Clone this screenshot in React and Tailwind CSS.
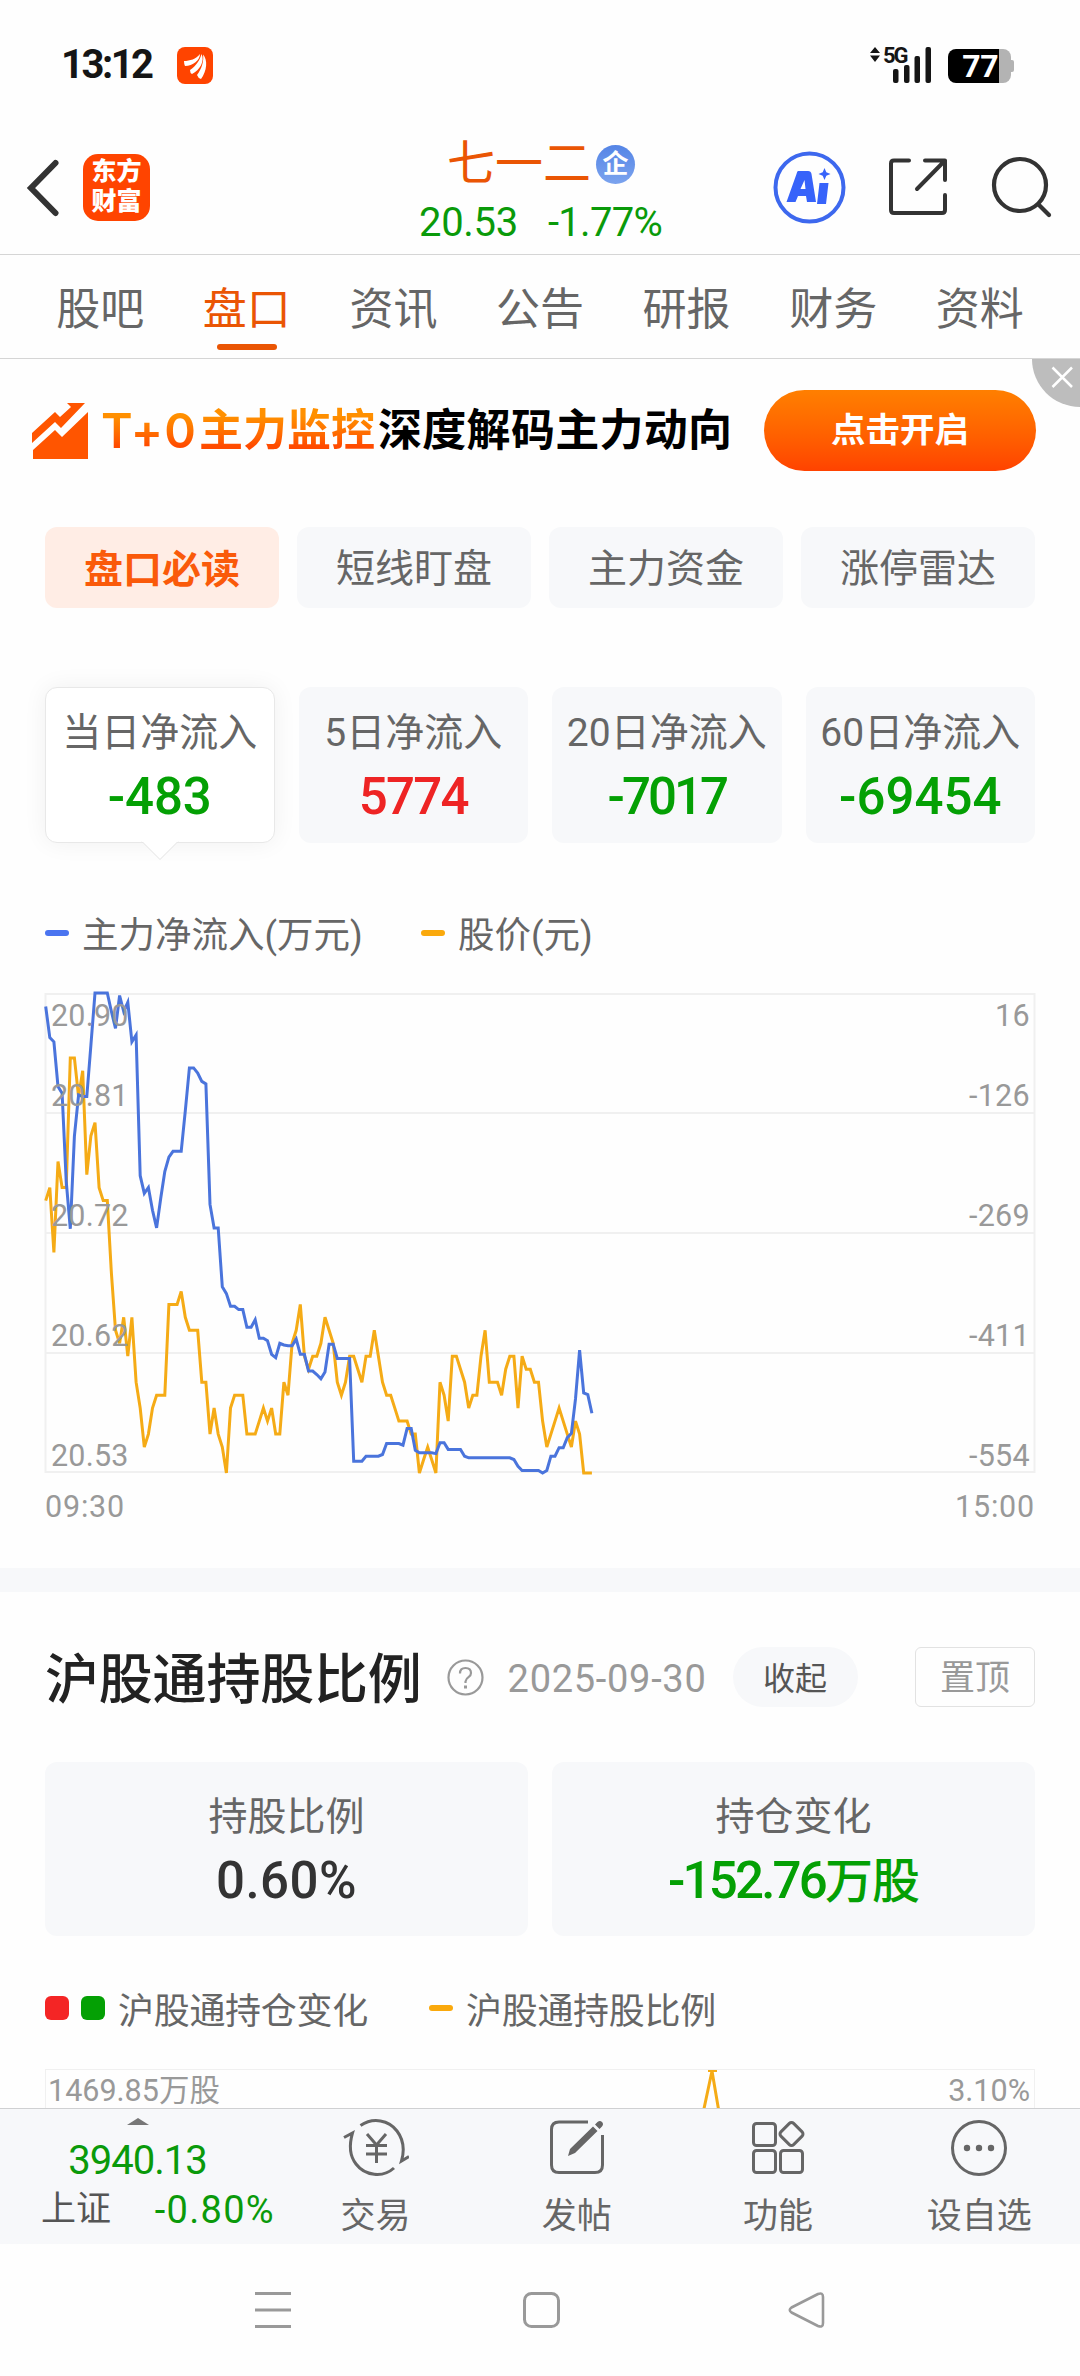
const tabs = ["股吧", "盘口", "资讯", "公告", "研报", "财务", "资料"];
const pills = ["盘口必读", "短线盯盘", "主力资金", "涨停雷达"];

const flows = [
  { label: "当日净流入", value: "-483", color: "tracking-[-0.1px] text-[#04a004]" },
  { label: "5日净流入", value: "5774", color: "tracking-[-1.7px] text-[#ee2424]" },
  { label: "20日净流入", value: "-7017", color: "tracking-[-3px] text-[#04a004]" },
  { label: "60日净流入", value: "-69454", color: "tracking-[0px] text-[#04a004]" },
];

const axis = [
  { price: "20.90", flow: "16" },
  { price: "20.81", flow: "-126" },
  { price: "20.72", flow: "-269" },
  { price: "20.62", flow: "-411" },
  { price: "20.53", flow: "-554" },
];

// net inflow per minute, in 10k yuan
const flowSeries = [
  0, -37, -42, -95, -103, -207, -264, -154, -105, -107, -107, -46, 16, 16, 16, 16, -6, -26, 13, -6,
  5, -42, -34, -201, -222, -215, -242, -263, -228, -196, -179, -172, -172, -172, -124, -73, -73, -79,
  -89, -92, -235, -263, -263, -333, -341, -356, -356, -360, -360, -381, -381, -372, -394, -394, -397,
  -413, -417, -400, -402, -403, -403, -395, -413, -413, -433, -433, -437, -442, -434, -401, -401,
  -418, -418, -418, -418, -540, -540, -540, -534, -534, -534, -534, -532, -519, -519, -519, -519,
  -521, -501, -501, -527, -530, -530, -530, -530, -531, -518, -518, -526, -526, -526, -526, -534,
  -536, -536, -536, -536, -536, -536, -536, -536, -536, -536, -536, -538, -546, -551, -551, -551,
  -551, -551, -554, -551, -534, -534, -524, -524, -512, -507, -466, -408, -459, -461, -483,
];

// price per minute, in cents above 20.53
const priceSeries = [
  21, 22, 17, 24, 22, 22, 32, 32, 29, 31, 23, 26, 27, 22, 21, 21, 15.4, 11, 10, 12, 9, 12, 7, 5, 2, 3,
  5, 6, 6, 6, 13, 13, 13, 14, 12, 11, 11, 11, 7, 7, 3, 5, 3, 2, 0, 5, 6, 6, 6, 3, 3, 3, 4, 5, 4, 5, 3,
  3, 7, 6, 10, 11, 13, 9, 8, 9, 9, 10, 12, 11, 10, 7, 6, 7, 9, 9, 8, 7, 9, 9, 11, 9, 7, 6, 6, 5, 4, 4,
  4, 3, 3, 0, 1, 2, 1, 0, 7, 6, 4, 9, 9, 8, 7, 5, 6, 6, 9, 11, 7, 7, 7, 6, 8, 9, 9, 5, 9, 8, 8, 7, 7,
  4, 2, 3, 4, 5, 4, 3, 2, 4, 3, 0, 0, 0,
];

const toPoints = (series, min, max) =>
  series.map((v, i) => `${(0.7 + i * 4.107).toFixed(1)},${(((max - v) / (max - min)) * 480 - 1).toFixed(1)}`).join(" ");

const StatusBar = () => (
  <div className="flex h-[105px] shrink-0 items-start justify-between pl-[61px] pr-[66px] pt-[46px]">
    <div className="flex items-center">
      <span className="w-[116px] text-[40px] font-bold leading-[38px] tracking-[-2.5px] text-[#151515]">13:12</span>
      <svg width="36" height="37" viewBox="0 0 36 37">
        <rect width="36" height="37" rx="8" fill="#ff4400" />
        <path d="M7 14C13 14 19 12 23 7C23 13 16 19 8 19Q7 17 7 14z" fill="#fff" />
        <path d="M13 23C19 19 23 13 24.500 7C28 14 23 23 15 27Q13 26 13 23z" fill="#fff" />
        <path d="M20 28C25 21 27 14 26 7.500C31 13 30 24 24 32Q21 31 20 28z" fill="#fff" />
      </svg>
    </div>
    <div className="flex items-start">
      <svg className="mt-[-8px]" width="66" height="46" viewBox="0 -8 66 46" fill="#151515">
        <path d="M2 7L7 1L12 7zM2 9.500L7 16L12 9.500z" />
        <text x="15" y="16.500" fontSize="22" fontWeight="700" fontFamily="Roboto, sans-serif" letterSpacing="-2">5G</text>
        <rect x="25" y="23" width="5.500" height="14" rx="2" />
        <rect x="36" y="19" width="5.500" height="18" rx="2" />
        <rect x="46.500" y="10" width="5.500" height="27" rx="2" />
        <rect x="57.500" y="1" width="5.500" height="36" rx="2" />
      </svg>
      <div className="ml-[14px] mt-[3px] flex h-[34px] items-center">
        <div className="flex h-full w-[51px] items-center justify-end rounded-l-[8px] bg-black pr-[1px] text-[32px] font-bold leading-none tracking-[-0.5px] text-white">
          77
        </div>
        <div className="h-full w-[12px] rounded-r-[8px] bg-[#b3b3b3]" />
        <div className="h-[12px] w-[3px] rounded-r-[2px] bg-[#b3b3b3]" />
      </div>
    </div>
  </div>
);

const Header = () => (
  <header className="flex h-[150px] shrink-0 border-b border-[#d5d5d5] pl-[26px]">
    <svg className="mt-[54px]" width="34" height="58" viewBox="0 0 34 58" fill="none" stroke="#333" strokeWidth="6">
      <path d="M29.500 4L5 29L29.500 54" strokeLinecap="round" />
    </svg>
    <div className="ml-[23px] mt-[49px] flex h-[67px] w-[67px] flex-col items-center justify-center rounded-[15px] bg-[#ff4400] pb-[2px] text-[25px] font-black leading-[30px] text-white">
      <span>东方</span>
      <span>财富</span>
    </div>
    <div className="ml-[269px] mt-[32px] w-[260px]">
      <div className="flex h-[54px] items-center pl-[28px]">
        <span className="text-[48px] leading-none text-[#ea5504]">七一二</span>
        <span className="ml-[5px] flex h-[39px] w-[39px] items-center justify-center rounded-full bg-gradient-to-b from-[#5585e6] to-[#7ba3ee] text-[26px] font-bold leading-none text-white">
          企
        </span>
      </div>
      <div className="mt-[4px] flex gap-[30px] whitespace-nowrap text-[40px] leading-[56px] text-[#0a9a0a]">
        <span className="tracking-[-0.3px]">20.53</span>
        <span className="tracking-[-0.7px]">-1.77%</span>
      </div>
    </div>
    <div className="ml-[94px] mt-[46px] flex">
      <svg width="73" height="73" viewBox="0 0 73 73">
        <circle cx="36.500" cy="36.500" r="34" fill="none" stroke="#3d68ee" strokeWidth="4" />
        <path d="M25 20h10q3 0 3.500 3l4.500 28h-9l-1-6h-8l-2.500 6h-9l10-28q.7-3 1.500-3zM27.500 38h5l-1-9z" fill="#3763fa" fillRule="evenodd" />
        <path d="M46.500 32h9l-2.500 21h-9zM51.500 17l1.800 4.200 4.200 1.800-4.200 1.800-1.800 4.200-1.800-4.200-4.200-1.800 4.200-1.800z" fill="#3763fa" />
      </svg>
      <svg className="ml-[42px] mt-[6px]" width="60" height="60" viewBox="0 0 60 60" fill="none" stroke="#333" strokeWidth="4" strokeLinecap="round" strokeLinejoin="round">
        <path d="M21 3.500H6Q3 3.500 3 6.500V53Q3 56 6 56H54Q57 56 57 53V38" />
        <path d="M37 3.500H57V23M57 3.500L29 32" />
      </svg>
      <svg className="ml-[43px] mt-[4px]" width="64" height="64" viewBox="0 0 64 64" fill="none" stroke="#333" strokeWidth="4.200" strokeLinecap="round">
        <circle cx="29" cy="30" r="26" />
        <path d="M48 50L58 60" />
      </svg>
    </div>
  </header>
);

const Tabs = () => (
  <nav className="flex h-[104px] shrink-0 border-b border-[#d5d5d5] px-[27px]">
    {tabs.map((tab) => (
      <div key={tab} className="flex flex-1 flex-col items-center pt-[23px]">
        <span className={tab === "盘口" ? "text-[44px] leading-[64px] text-[#ea5504]" : "text-[44px] leading-[64px] text-[#666]"}>{tab}</span>
        {tab === "盘口" && <span className="mt-[2px] h-[6px] w-[60px] rounded-full bg-[#ea5504]" />}
      </div>
    ))}
  </nav>
);

const Banner = () => (
  <div className="relative flex h-[112px] items-center pl-[31px] pt-[31px]">
    <svg width="58" height="57" viewBox="0 0 58 57" fill="#ff5500">
      <path d="M1 41V31L24 10L29 15L40 5L36 1H54L30 26L24 20z" />
      <path d="M2 48L24 28L31 35L57 10V57H2z" />
    </svg>
    <div className="ml-[12px] flex items-center whitespace-nowrap bg-gradient-to-b from-[#ff9000] from-25% to-[#ff4a00] to-75% bg-clip-text leading-[60px] text-transparent">
      <span className="w-[98px] font-[Inter] text-[48px] font-semibold tracking-[1px]">T+0</span>
      <span className="text-[44px] font-bold">主力监控</span>
    </div>
    <span className="ml-[3px] whitespace-nowrap text-[44px] font-bold leading-[60px] tracking-[0.3px] text-black">深度解码主力动向</span>
    <button className="ml-auto mr-[44px] h-[81px] w-[272px] rounded-full bg-gradient-to-b from-[#ff7f00] to-[#ff4200] text-[34.500px] font-bold text-white">
      点击开启
    </button>
    <div className="absolute right-0 top-0 h-[48px] w-[48px] rounded-bl-full bg-[#bdbdbd]">
      <svg width="48" height="48" viewBox="0 0 48 48" stroke="#fff" strokeWidth="2.500">
        <path d="M20.500 8.500L40 28M40 8.500L20.500 28" />
      </svg>
    </div>
  </div>
);

const FlowCards = () => (
  <div className="mt-[79px] grid grid-cols-4 gap-[24px] px-[45px]">
    {flows.map((f, i) => (
      <div
        key={f.label}
        className={
          i === 0
            ? "relative flex h-[156px] flex-col items-center rounded-[12px] border border-[#e8e8e8] bg-white pt-[16px] shadow-[0_0_24px_rgba(0,0,0,0.06)]"
            : "flex h-[156px] flex-col items-center rounded-[12px] bg-[#f7f8fa] pt-[17px]"
        }
      >
        <span className="whitespace-nowrap text-[39px] leading-[58px] text-[#666]">{f.label}</span>
        <span className={`text-[51px] font-medium leading-[70px] ${f.color}`}>{f.value}</span>
        {i === 0 && (
          <svg className="absolute -bottom-[19px] left-[95px]" width="38" height="20" viewBox="0 0 38 20">
            <path d="M1 0.500L19 18.500L37 0.500" fill="#fff" stroke="#e3e3e3" />
            <path d="M1 0H37" stroke="#fff" strokeWidth="2" />
          </svg>
        )}
      </div>
    ))}
  </div>
);

const FlowChart = () => (
  <div className="mt-[38px] px-[45px]">
    <div className="relative h-[479px]">
      <svg className="overflow-visible" width="990" height="479" viewBox="0 0 990 479" fill="none">
        <path d="M0.500 0H989.500V478H0.500zM0 119H990M0 239H990M0 359H990" stroke="#f0f0f0" strokeWidth="2" />
        <polyline points={toPoints(priceSeries, 0, 37)} stroke="#f5ab16" strokeWidth="3" />
        <polyline points={toPoints(flowSeries, -554, 16)} stroke="#4a74dc" strokeWidth="3" />
      </svg>
      {/* value scales sit on top of the lines */}
      <div className="absolute inset-0 flex flex-col pl-[6px] pr-[5px] pt-[2px] text-[30.500px] leading-[40px] text-[#999]">
        {axis.map((a, i) => (
          <div key={a.price} className={i === 0 ? "mb-[40px] flex justify-between" : i === 4 ? "flex justify-between" : "mb-[80px] flex justify-between"}>
            <span className="tracking-[0.2px]">{a.price}</span>
            <span className="tracking-[0.3px]">{a.flow}</span>
          </div>
        ))}
      </div>
    </div>
    <div className="flex h-[68px] items-center justify-between text-[30.500px] tracking-[0.8px] text-[#999]">
      <span>09:30</span>
      <span>15:00</span>
    </div>
  </div>
);

const Holding = () => (
  <section>
    <div className="mt-[55px] flex h-[60px] items-center px-[45px]">
      <h2 className="pt-[7px] text-[54px] font-medium leading-[60px] tracking-[-0.2px] text-[#222]">沪股通持股比例</h2>
      <svg className="ml-[25px]" width="37" height="37" viewBox="0 0 37 37" fill="none" stroke="#999" strokeWidth="2.200">
        <circle cx="18.500" cy="18.500" r="17" />
        <path d="M13 14.500Q13 9 18.500 9T24 14Q24 16.500 21.500 18.200T18.500 22.500V24" />
        <path d="M18.500 26.500V29.500" strokeWidth="3" />
      </svg>
      <span className="ml-[24px] w-[225px] pt-[4px] text-[38px] tracking-[0.7px] text-[#999]">2025-09-30</span>
      <span className="flex h-[60px] w-[125px] items-center justify-center rounded-full bg-[#f7f8fa] pt-[3px] text-[32px] text-[#555]">收起</span>
      <span className="ml-auto flex h-[60px] w-[120px] items-center justify-center rounded-[6px] border border-[#e2e2e2] pt-[4px] text-[35px] text-[#999]">置顶</span>
    </div>
    <div className="mt-[55px] grid grid-cols-2 gap-[24px] px-[45px]">
      <div className="flex h-[174px] flex-col items-center rounded-[12px] bg-[#f7f8fa] pt-[26px]">
        <span className="text-[39px] leading-[58px] text-[#666]">持股比例</span>
        <span className="text-[51px] font-medium leading-[70px] tracking-[0.5px] text-[#333]">0.60%</span>
      </div>
      <div className="flex h-[174px] flex-col items-center rounded-[12px] bg-[#f7f8fa] pt-[26px]">
        <span className="text-[39px] leading-[58px] text-[#666]">持仓变化</span>
        <span className="text-[51px] font-medium leading-[70px] tracking-[-2.800px] text-[#04a004]">
          -152.76<span className="text-[48px] tracking-[-1px]">万股</span>
        </span>
      </div>
    </div>
    <div className="mt-[55px] flex h-[42px] items-center px-[45px] text-[36px] leading-[42px] text-[#666]">
      <span className="mb-[9px] h-[24px] w-[24px] rounded-[6px] bg-[#f42525]" />
      <span className="mb-[9px] ml-[12px] h-[24px] w-[24px] rounded-[6px] bg-[#04a004]" />
      <span className="ml-[13px] w-[311px] tracking-[-0.3px]">沪股通持仓变化</span>
      <span className="mb-[9px] h-[6px] w-[24px] rounded-[3px] bg-[#faa90c]" />
      <span className="ml-[13px] tracking-[-0.3px]">沪股通持股比例</span>
    </div>
    <div className="mx-[45px] mt-[36px] border border-[#f0f0f0]">
      <div className="flex h-[60px] pl-[2px] pr-[4px] text-[30.500px] leading-[42px] text-[#999]">
        <span className="w-[653px]">1469.85万股</span>
        <svg width="24" height="60" viewBox="0 0 24 60" fill="none" stroke="#f5ab16" strokeWidth="3">
          <path d="M1 48L11 1L19 48M7 0.500H16" />
        </svg>
        <span className="ml-auto">3.10%</span>
      </div>
    </div>
  </section>
);

const icons = {
  交易: (
    <svg width="66" height="60" viewBox="0 0 66 60" fill="none" stroke="#666" strokeWidth="3">
      <path d="M17.500 7.500C30-1 46 2 54 13C60 21 62 31 58.500 43L66 38.500" />
      <path d="M51 50C40 60 22 58 13 46C6 37 6 27 9.500 15L1 19.500" />
      <path d="M24 16L33.500 27L43 16M33.500 27V45M23 27.500H44M23 36H44" />
    </svg>
  ),
  发帖: (
    <svg width="56" height="60" viewBox="0 0 56 60" fill="none" stroke="#666" strokeWidth="3">
      <path d="M39 4H10Q2.500 4 2.500 11.500V47Q2.500 54.500 10 54.500H46Q53.500 54.500 53.500 47V17" />
      <path d="M19 38L21 31L44 8.500L48.500 13L26 35zM46 6.500L48.500 4Q51 2 53 4T53 8.500L50.500 11z" fill="#666" stroke="none" />
    </svg>
  ),
  功能: (
    <svg width="54" height="60" viewBox="0 0 54 60" fill="none" stroke="#666" strokeWidth="3">
      <rect x="2.500" y="5.500" width="22" height="22" rx="3" />
      <rect x="2.500" y="32.500" width="22" height="22" rx="3" />
      <rect x="29.500" y="32.500" width="22" height="22" rx="3" />
      <rect x="31.500" y="7" width="18" height="18" rx="3" transform="rotate(45 40.500 16)" />
    </svg>
  ),
  设自选: (
    <svg width="58" height="60" viewBox="0 0 58 60" fill="#666">
      <circle cx="29" cy="30" r="26.500" fill="none" stroke="#666" strokeWidth="3" />
      <circle cx="17" cy="30" r="3.200" />
      <circle cx="29" cy="30" r="3.200" />
      <circle cx="41" cy="30" r="3.200" />
    </svg>
  ),
};

const BottomBar = () => (
  <footer className="flex h-[136px] shrink-0 border-t border-[#cfd0d2] bg-[#f7f8fa]">
    <div className="flex w-[275px] flex-col items-center">
      <svg className="mt-[9px]" width="22" height="7" viewBox="0 0 22 7">
        <path d="M0 7L11 0L22 7z" fill="#777" />
      </svg>
      <span className="mt-[14px] text-[40px] leading-[44px] tracking-[-1px] text-[#0a9a0a]">3940.13</span>
      <div className="mt-[1px] flex w-full items-center justify-between pl-[41px] leading-[52px]">
        <span className="text-[35px] text-[#555]">上证</span>
        <span className="text-[38px] tracking-[1.300px] text-[#0a9a0a]">-0.80%</span>
      </div>
    </div>
    <div className="grid flex-1 grid-cols-4">
      {Object.keys(icons).map((name) => (
        <div key={name} className="flex flex-col items-center pt-[9px]">
          {icons[name]}
          <span className="mt-[14px] text-[35px] leading-[50px] text-[#666]">{name}</span>
        </div>
      ))}
    </div>
  </footer>
);

const SystemNav = () => (
  <div className="flex h-[132px] shrink-0 items-start pl-[255px] pt-[47px]">
    <svg width="36" height="38" viewBox="0 0 36 38" stroke="#999" strokeWidth="3">
      <path d="M0 2.500H36M0 19H36M0 35.500H36" />
    </svg>
    <svg className="ml-[232px]" width="37" height="38" viewBox="0 0 37 38" fill="none" stroke="#999" strokeWidth="3">
      <rect x="1.500" y="2.500" width="34" height="33" rx="7" />
    </svg>
    <svg className="ml-[228px]" width="37" height="38" viewBox="0 0 37 38" fill="none" stroke="#999" strokeWidth="2.600" strokeLinejoin="round">
      <path d="M3.500 16.500L30 3Q35 1 35 6V32Q35 37 30 35L3.500 21.500Q0 19 3.500 16.500z" />
    </svg>
  </div>
);

const App = () => {
  return (
    <div className="flex h-[2376px] w-[1080px] flex-col overflow-hidden bg-[#fefefe] font-[Roboto,'Noto_Sans_CJK_SC',sans-serif]">
      <StatusBar />
      <Header />
      <Tabs />
      <main className="min-h-0 flex-1 overflow-hidden">
        <Banner />
        <div className="mt-[56px] grid grid-cols-4 gap-[18px] px-[45px]">
          {pills.map((pill, i) => (
            <div
              key={pill}
              className={
                i === 0
                  ? "flex h-[81px] items-center justify-center rounded-[12px] bg-[#ffede5] pt-[5px] text-[39px] font-bold text-[#fa5a0a]"
                  : "flex h-[81px] items-center justify-center rounded-[12px] bg-[#f7f8fa] pt-[4px] text-[39px] text-[#666]"
              }
            >
              {pill}
            </div>
          ))}
        </div>
        <FlowCards />
        <div className="mt-[72px] flex h-[42px] items-center px-[45px] text-[36.500px] leading-[42px] text-[#666]">
          <span className="mb-[7px] h-[6px] w-[24px] rounded-[3px] bg-[#4a74f0]" />
          <span className="ml-[13px] w-[339px]">主力净流入(万元)</span>
          <span className="mb-[7px] h-[6px] w-[24px] rounded-[3px] bg-[#faa90c]" />
          <span className="ml-[13px]">股价(元)</span>
        </div>
        <div className="-mt-[1px]">
          <FlowChart />
        </div>
        <div className="mt-[27px] h-[24px] bg-[#f7f8fa]" />
        <Holding />
      </main>
      <BottomBar />
      <SystemNav />
    </div>
  );
};

export default App;
